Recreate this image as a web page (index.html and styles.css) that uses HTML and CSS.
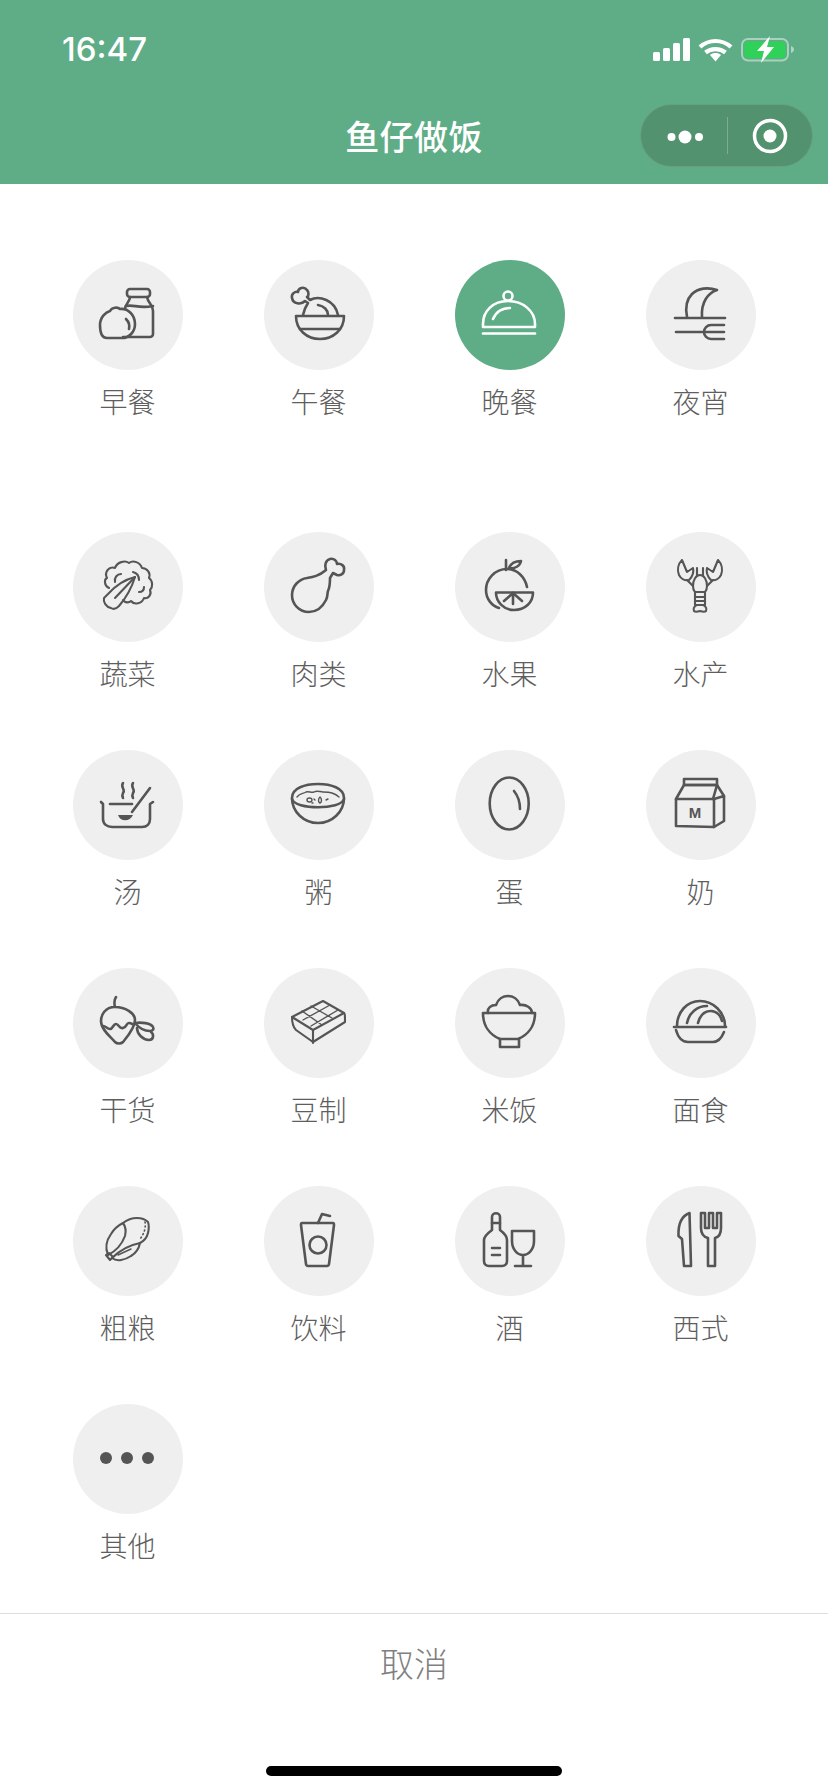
FILE: index.html
```html
<!DOCTYPE html>
<html lang="zh-CN">
<head>
<meta charset="utf-8">
<title>鱼仔做饭</title>
<link rel="stylesheet" href="styles.css">
</head>
<body>
<div class="page">
  <header class="topbar">
    <div class="status">
      <span class="time">16:47</span>
      <svg class="status-icons" width="146" height="30" viewBox="0 0 146 30">
        <g fill="#fff">
          <rect x="0" y="18" width="7" height="9" rx="1.500"/><rect x="10" y="14" width="7" height="13" rx="1.500"/><rect x="20" y="9" width="7" height="18" rx="1.500"/><rect x="30" y="4" width="7" height="23" rx="1.500"/>
          <path d="M62.500 27.500l-5.500-6.500c3-2.600 8-2.600 11 0z"/>
          <path d="M47 13C56 5 69 5 78 13" fill="none" stroke="#fff" stroke-width="4.200"/>
          <path d="M52.500 18.500C58 14 67 14 72.500 18.500" fill="none" stroke="#fff" stroke-width="4.200"/>
        </g>
        <rect x="89" y="5" width="46" height="21.500" rx="6" fill="none" stroke="#fff" stroke-opacity=".45" stroke-width="2"/>
        <rect x="91.500" y="7.500" width="41" height="16.500" rx="3.500" fill="#30d158"/>
        <path d="M138 12c2 .8 3 2 3 3.500s-1 2.700-3 3.500z" fill="#fff" fill-opacity=".5"/>
        <path d="M117 2L104 17h7l-3 12 13-16h-7z" fill="#fff"/>
      </svg>
    </div>
    <div class="navbar">
      <h1 class="title">鱼仔做饭</h1>
      <div class="capsule">
        <svg width="173" height="63" viewBox="0 0 173 63">
          <g fill="#fff"><circle cx="31.500" cy="33" r="4"/><circle cx="45" cy="33" r="6.500"/><circle cx="59" cy="33" r="4"/></g>
          <path d="M87.500 13v37" stroke="#fff" stroke-opacity=".25" stroke-width="1"/>
          <circle cx="130" cy="32" r="15.500" fill="none" stroke="#fff" stroke-width="3.500"/>
          <circle cx="130" cy="32" r="6.500" fill="#fff"/>
        </svg>
      </div>
    </div>
  </header>

  <main class="content">
    <section class="grid meals">
      <div class="item"><div class="disc"><svg class="ico" viewBox="0 0 110 110">
        <path d="M57 29h17a3 3 0 0 1 3 3v2a3 3 0 0 1-3 3H57a3 3 0 0 1-3-3v-2a3 3 0 0 1 3-3z"/>
        <path d="M57 37c0 5-5 7-5 12M74 37c1 6 6 8 6 14v23a3 3 0 0 1-3 3H50"/>
        <path d="M53 46c8-2 12 3 27 0"/>
        <path d="M34 78c-6 0-7-8-7-13 0-8 6-13 10-14 2-4 8-4 10-2 8-1 15 6 15 15 0 8-6 14-13 14z"/>
        <path d="M53 59c3 3 4 6 3 10"/>
      </svg></div><span class="label">早餐</span></div>

      <div class="item"><div class="disc"><svg class="ico" viewBox="0 0 110 110">
        <path d="M32 56h48c0 14-11 23-24 23S32 70 32 56z"/>
        <path d="M36 69h40"/>
        <path d="M39 55C40 50 42 46 44 43L41 41C37 45 29 44 28 38 27 34 31 31 34 32 34 28 40 26 43 30 45 32 45 36 43 37L46 40C55 35 71 40 74 55"/>
        <path d="M54 45c6 1 10 5 10 10"/>
      </svg></div><span class="label">午餐</span></div>

      <div class="item"><div class="disc active"><svg class="ico" viewBox="0 0 110 110">
        <circle cx="53" cy="36" r="4.500"/>
        <path d="M28 67h52v-3C80 51 68 41 53 41S28 51 28 64z"/>
        <path d="M28 73.500h52"/>
        <path d="M38 59c3-7 9-11 17-11"/>
      </svg></div><span class="label">晚餐</span></div>

      <div class="item"><div class="disc"><svg class="ico" viewBox="0 0 110 110">
        <path d="M41 57C39 47 41 39 46 34 52 28 62 27 71 30 62 33 55 42 56 57"/>
        <path d="M29 58h50"/>
        <path d="M30 72h48M78 65H65a7 7 0 0 0 0 14h13"/>
      </svg></div><span class="label">夜宵</span></div>
    </section>

    <section class="grid foods">
      <div class="item"><div class="disc"><svg class="ico thin" viewBox="0 0 110 110">
        <path d="M36 56C31 54 31 47 34 46 31 40 36 34 42 36 44 30 52 28 56 31 60 28 67 30 69 36 74 36 78 41 76 46 80 49 80 55 77 58 79 63 75 67 71 66 69 72 61 73 58 69 56 71 52 71 50 68"/>
        <path d="M62 45C54 47 44 52 35 62L31 66C30 70 33 75 38 76 41 78 44 76 46 74 52 67 58 58 62 45Z"/>
        <path d="M62 45L42 66M48 42C44 42 41 46 42 50M60 40c4 1 6 4 6 8M66 60c3 0 5-2 5-5"/>
      </svg></div><span class="label">蔬菜</span></div>

      <div class="item"><div class="disc"><svg class="ico" viewBox="0 0 110 110">
        <path d="M62 38C60 33 62 28 66 27 70 26 73 29 73 32 77 31 81 34 80 38 80 42 76 44 73 43L69 41 66 46C66 50 66 55 64 59 63 62 64 64 62 68 58 76 52 80 45 80 35 80 28 72 28 63 28 54 35 47 43 46 49 45 55 44 62 38Z"/>
      </svg></div><span class="label">肉类</span></div>

      <div class="item"><div class="disc"><svg class="ico" viewBox="0 0 110 110">
        <path d="M72 55C70 45 62 37 52 37 40 37 31 47 31 58c0 9 6 16 13 18"/>
        <path d="M51 28v10M54 36c2-5 7-7 12-7-1 5-6 8-12 7z"/>
        <path d="M41 60.500h37c0 10-8 17.500-19 17.500-10 0-18-8-18-17.500z"/>
        <path d="M58 61v11M58 61L49 69M58 61l9 8"/>
      </svg></div><span class="label">水果</span></div>

      <div class="item"><div class="disc"><svg class="ico thin" viewBox="0 0 110 110">
        <path d="M54 43c-4 0-7 5-7 11 0 3 1 5 2 6h10c1-1 2-3 2-6 0-6-3-11-7-11z"/>
        <path d="M49 60h10v13H49zM49 65h10M49 69h10"/>
        <path d="M51 73c-3 1-4 4-3 6 1 1 3 1 6 0 3 1 5 1 6 0 1-2 0-5-3-6"/>
        <path d="M36 28C32 32 31 38 33 43 35 47 39 49 43 48 46 45 48 40 47 36L41 40ZM72 28C76 32 77 38 75 43 73 47 69 49 65 48 62 45 60 40 61 36L67 40Z"/>
        <path d="M41 48l6 6M67 48l-6 6M51 36v8M57 36v8"/>
      </svg></div><span class="label">水产</span></div>

      <div class="item"><div class="disc"><svg class="ico" viewBox="0 0 110 110">
        <path d="M28 52l2 2v15c0 5 4 8 9 8h30c5 0 8-3 8-8V54l3-2"/>
        <path d="M37 54h22"/>
        <path d="M77 38L59 62"/>
        <path class="fill" d="M45 65h15c-3 7-13 7-15 0z"/>
        <path d="M50 33c-3 4 3 7 0 10-1 2-1 3 0 5M60 33c-3 4 3 7 0 10-1 2-1 3 0 5"/>
      </svg></div><span class="label">汤</span></div>

      <div class="item"><div class="disc"><svg class="ico" viewBox="0 0 110 110">
        <path d="M28 48c0-10 13-14 26-14s26 4 26 14c0 14-12 25-26 25S28 62 28 48z"/>
        <path d="M28 49c3 11 49 11 52 0"/>
        <path class="hair" d="M33 47c3-4 6-3 9-5 3-1 5 1 8 0 3-2 6 0 9 0 3 0 6 0 9 1 3 1 5 2 7 4"/>
        <path class="hair" d="M43 50a2.500 2 0 1 0 5 0 2.500 2 0 1 0-5 0zM56 47c-2 2-2 5 0 6 2-1 2-4 0-6zM50 49l1 1M62 50l2-1M48 53l1 0"/>
      </svg></div><span class="label">粥</span></div>

      <div class="item"><div class="disc"><svg class="ico" viewBox="0 0 110 110">
        <ellipse cx="54.200" cy="53.500" rx="19.500" ry="26"/>
        <path d="M59 41c4 5 6 11 6 18"/>
      </svg></div><span class="label">蛋</span></div>

      <div class="item"><div class="disc"><svg class="ico" viewBox="0 0 110 110">
        <path d="M30 49h38v28l-38-1z"/>
        <path d="M68 49l10-3v25l-10 6"/>
        <path d="M30 49l8-14h33l7 11"/>
        <path d="M38 29h33v6H38zM71 35l-4 14"/>
        <text class="carton" x="49" y="68" text-anchor="middle">M</text>
      </svg></div><span class="label">奶</span></div>

      <div class="item"><div class="disc"><svg class="ico" viewBox="0 0 110 110">
        <path d="M43 29c-2 3-2 6-1 10-10 0-14 8-14 14 0 9 10 16 14 21 2 2 6 2 8 0 4-5 12-14 12-22 0-7-10-13-20-13"/>
        <path d="M30 58c3 0 4 3 7 3s3-5 6-5 3 5 7 4 3-5 6-5c2 0 3 1 5 2"/>
        <path d="M62 55C68 54 78 55 80 59 81 61 80 63 77 63 72 63 66 60 62 55ZM64 60C64 66 70 72 76 72 81 72 81 66 78 64"/>
      </svg></div><span class="label">干货</span></div>

      <div class="item"><div class="disc"><svg class="ico thin" viewBox="0 0 110 110">
        <path d="M59 33l21 12c1 0 1 4 1 9l-32 20-17-12c-3-3-4-8-4-13z"/>
        <path d="M28 49l21 13 31-17M49 62v13"/>
        <path class="hair" d="M39 52L66 37M47 58L74 42M38 43L58 57M47 38L68 50"/>
      </svg></div><span class="label">豆制</span></div>

      <div class="item"><div class="disc"><svg class="ico" viewBox="0 0 110 110">
        <path d="M28 45h52c0 13-7 22-17 26H45C35 67 28 58 28 45z"/>
        <path d="M45 71v8h19v-8"/>
        <path d="M33 45c-1-5 3-8 8-8 2-6 7-9 12-9s10 3 12 9c6-1 12 3 12 8"/>
      </svg></div><span class="label">米饭</span></div>

      <div class="item"><div class="disc"><svg class="ico" viewBox="0 0 110 110">
        <path d="M31 58c0-14 10-25 23-25s25 11 25 25"/>
        <path d="M28 59h52"/>
        <path d="M30 62c2 7 6 12 12 12h25c5 0 9-5 11-10"/>
        <path d="M41 55c2-10 10-17 20-17M52 55c2-8 7-12 13-12 6 0 10 5 11 10"/>
      </svg></div><span class="label">面食</span></div>

      <div class="item"><div class="disc"><svg class="ico thin" viewBox="0 0 110 110">
        <path d="M35 69c-3-7-2-14 3-21 3-5 8-9 12-11 3 4 3 9 2 13-3 8-9 15-17 19z"/>
        <path d="M39 72c7-7 18-13 28-15-1 5-4 10-9 13-6 4-14 6-19 2z"/>
        <path d="M50 37c5-4 10-5 14-5 4 0 8 1 11 4 1 3 1 7 0 11-1 4-4 8-8 10"/>
        <path class="hair" d="M45 69L58 63"/>
        <path class="dash" d="M72 36c1 6-1 12-5 17"/>
        <path d="M33 69l3-2 4 4-3 3z"/>
      </svg></div><span class="label">粗粮</span></div>

      <div class="item"><div class="disc"><svg class="ico" viewBox="0 0 110 110">
        <path d="M38 37h31c1 0 1 1 1 2l-5 39c0 1-1 2-2 2H44c-1 0-2-1-2-2l-5-39c0-1 0-2 1-2z"/>
        <path d="M54 37l4-9 8 2"/>
        <circle cx="54" cy="59" r="8.500"/>
      </svg></div><span class="label">饮料</span></div>

      <div class="item"><div class="disc"><svg class="ico" viewBox="0 0 110 110">
        <path d="M37 44V31c0-5 8-5 8 0v13c4 3 7 6 7 10v21c0 3-2 5-5 5H34c-3 0-5-2-5-5V54c0-4 4-7 8-10z"/>
        <path d="M37 37h8M37 62h8M37 69h8"/>
        <path d="M57 45h22v10c0 8-5 14-11 14s-11-6-11-14zM68 69v11M60 80h16"/>
      </svg></div><span class="label">酒</span></div>

      <div class="item"><div class="disc"><svg class="ico" viewBox="0 0 110 110">
        <path d="M43.500 27c-8 3-11.500 11-11 23l3.500 3 2 27h7z"/>
        <path d="M55 27v15c0 6 3 9 7 10v28h7V52c4-1 6-4 6-10V27h-4v15h-4V27h-4v15h-4V27z"/>
      </svg></div><span class="label">西式</span></div>

      <div class="item"><div class="disc"><svg class="ico" viewBox="0 0 110 110">
        <g class="fill"><circle cx="33" cy="54" r="6"/><circle cx="54" cy="54" r="6"/><circle cx="75" cy="54" r="6"/></g>
      </svg></div><span class="label">其他</span></div>
    </section>
  </main>

  <footer class="footer">
    <button class="cancel" type="button">取消</button>
    <div class="home-row"><div class="home-bar"></div></div>
  </footer>
</div>
</body>
</html>
```

FILE: styles.css
```css
* { box-sizing: border-box; }
html, body { margin: 0; padding: 0; background: #fff; }
body { font-family: "Noto Sans CJK SC", "Noto Sans", sans-serif; }
.page { width: 828px; height: 1792px; display: flex; flex-direction: column; overflow: hidden; }

.topbar { height: 184px; background: #5fad87; color: #fff; flex: none; }
.status { height: 88px; padding: 10px 29px 0 62px; display: flex; justify-content: space-between; align-items: center; }
.time { font-family: Inter, "Liberation Sans", sans-serif; font-size: 33px; font-weight: 500; letter-spacing: 0; line-height: 40px; }
.status-icons { display: block; }

.navbar { position: relative; height: 96px; display: flex; align-items: center; justify-content: center; }
.title { margin: 0; font-size: 34px; font-weight: 500; letter-spacing: .4px; line-height: 48px; }
.capsule { position: absolute; right: 15px; top: 16px; width: 173px; height: 63px; border-radius: 32px; background: #53926f; border: 1px solid rgba(255,255,255,.12); overflow: hidden; }
.capsule svg { display: block; margin: -1px; }

.content { flex: 1; padding: 76px 32px 0; }
.grid { display: grid; grid-template-columns: repeat(4, 191px); row-gap: 57px; }
.foods { margin-top: 111px; }
.item { display: flex; flex-direction: column; align-items: center; }
.disc { width: 110px; height: 110px; border-radius: 50%; background: #efefef; flex: none; }
.disc.active { background: #5fad87; }
.ico { display: block; width: 110px; height: 110px; fill: none; stroke: #555; stroke-width: 2.6; stroke-linecap: round; stroke-linejoin: round; }
.active .ico { stroke: #fff; }
.ico.thin { stroke-width: 2.1; }
.ico .fill { fill: #555; stroke: none; }
.ico .hair { stroke-width: 1.4; }
.ico .dash { stroke-dasharray: 1 3; stroke-width: 1.6; }
.ico .carton { font-family: "Liberation Sans", Arial, sans-serif; font-size: 15px; font-weight: 700; fill: #555; stroke: none; }
.label { margin-top: 11px; font-size: 28px; font-weight: 300; line-height: 40px; color: #5e5e5e; }

.footer { flex: none; border-top: 1px solid #ddd; height: 179px; display: flex; flex-direction: column; }
.cancel { height: 96px; width: 100%; border: 0; padding: 0; background: none; font-family: inherit; font-size: 34px; font-weight: 300; color: #808080; }
.home-row { flex: 1; display: flex; justify-content: center; padding-top: 56px; }
.home-bar { width: 296px; height: 10px; border-radius: 5px; background: #000; }
```
